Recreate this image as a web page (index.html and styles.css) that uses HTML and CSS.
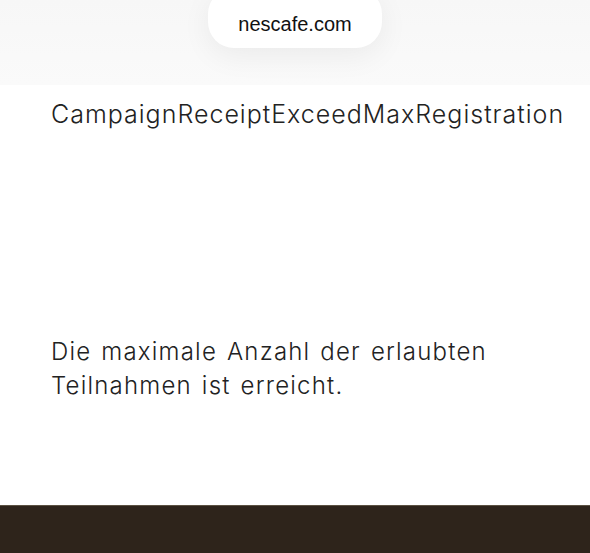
FILE: index.html
```
<!DOCTYPE html>
<html lang="de">
<head>
<meta charset="utf-8">
<title>nescafe.com</title>
<link rel="stylesheet" href="styles.css">
</head>
<body>

<div class="topbar">
	<div class="address">nescafe.com</div>
</div>

<div class="page">
	<h1 class="msg_key">CampaignReceiptExceedMaxRegistration</h1>
	<p class="msg_text">Die maximale Anzahl der erlaubten Teilnahmen ist erreicht.</p>
</div>

<div class="footer"></div>

</body>
</html>
```

FILE: styles.css
```
html, body {
	margin: 0px;
	padding: 0px;
	background: #fff;
	height: 100%;
}
body {
	display: flex;
	flex-direction: column;
	font-family: "Inter", "Liberation Sans", sans-serif;
	font-weight: 350;
	color: #222;
	overflow: hidden;
}
.topbar {
	height: 85px;
	background: linear-gradient(#f7f7f7, #fafafa);
	display: flex;
	justify-content: center;
	align-items: flex-start;
	flex-shrink: 0;
}
.address {
	margin-top: -12px;
	width: 174px;
	height: 60px;
	padding-top: 12px;
	box-sizing: border-box;
	background: #fff;
	border-radius: 26px;
	box-shadow: 0 8px 30px rgba(0, 0, 0, 0.06);
	display: flex;
	align-items: center;
	justify-content: center;
	font-family: "Liberation Sans", Arial, sans-serif;
	font-weight: normal;
	font-size: 20px;
	color: #111;
}
.page {
	flex: 1;
	padding: 0 10px 0 51px;
}
.msg_key {
	margin: 13px 0 0 0;
	font-weight: 350;
	font-size: 25px;
	line-height: 32px;
	letter-spacing: 1px;
	white-space: nowrap;
}
.msg_text {
	margin: 205px 0 0 0;
	width: 500px;
	font-size: 24px;
	line-height: 34px;
	letter-spacing: 1.2px;
	word-spacing: 2px;
}
.footer {
	height: 47px;
	flex-shrink: 0;
	background: #2e241b;
	border-top: 1px solid #5b5142;
}
```
